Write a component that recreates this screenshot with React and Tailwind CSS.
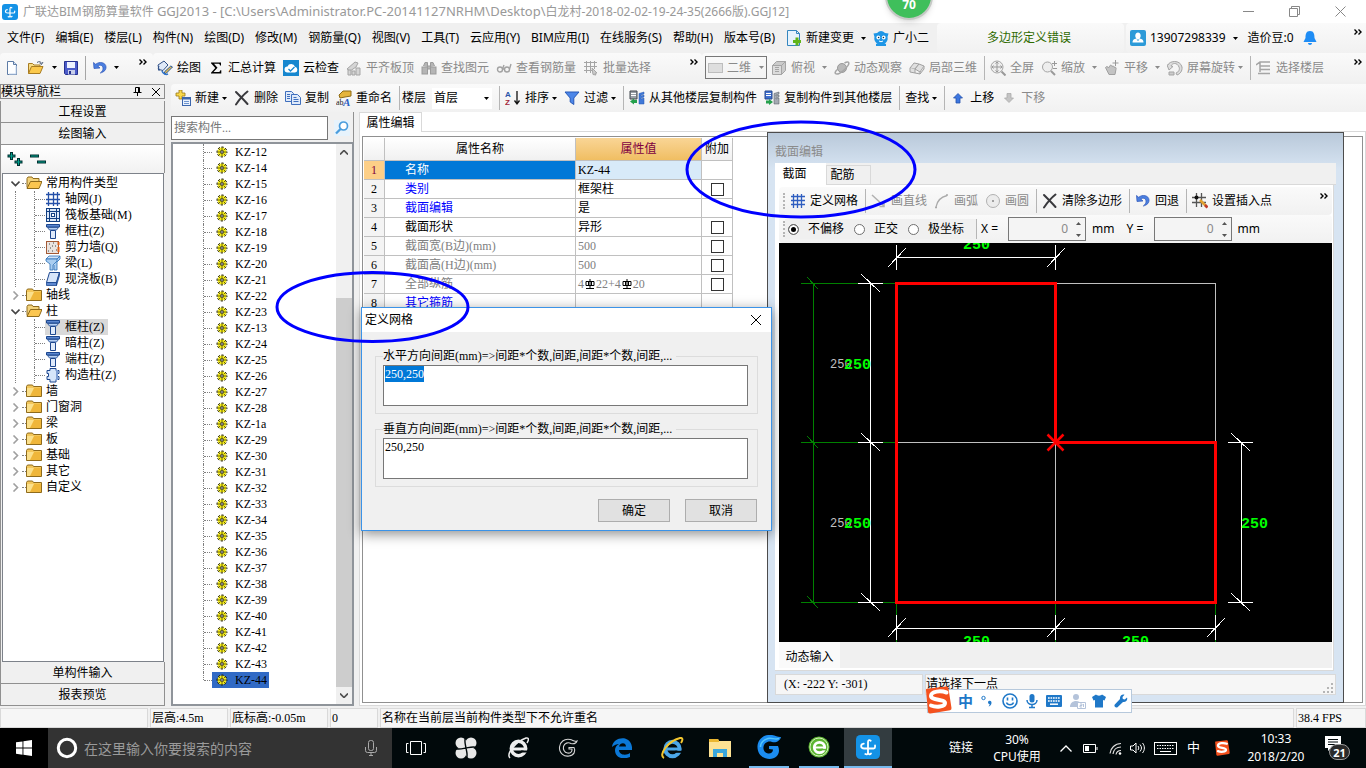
import { useEffect, useRef } from 'react'
import clsx from 'clsx'

// fonts
const UI = 'font-["Noto_Sans","Noto_Sans_CJK_SC",sans-serif]'
const SONG = 'font-["Liberation_Serif","Noto_Sans_CJK_SC",serif]'

// data
const menus = ['文件(F)', '编辑(E)', '楼层(L)', '构件(N)', '绘图(D)', '修改(M)', '钢筋量(Q)', '视图(V)', '工具(T)', '云应用(Y)', 'BIM应用(I)', '在线服务(S)', '帮助(H)', '版本号(B)']

const navTree = [
    { name: '常用构件类型', open: true, items: [['grid', '轴网(J)'], ['raft', '筏板基础(M)'], ['column', '框柱(Z)'], ['wall', '剪力墙(Q)'], ['beam', '梁(L)'], ['slab', '现浇板(B)']] },
    { name: '轴线' },
    { name: '柱', open: true, items: [['column', '框柱(Z)', true], ['column', '暗柱(Z)'], ['column', '端柱(Z)'], ['tie', '构造柱(Z)']] },
    { name: '墙' },
    { name: '门窗洞' },
    { name: '梁' },
    { name: '板' },
    { name: '基础' },
    { name: '其它' },
    { name: '自定义' },
]

const columns = ['12', '14', '15', '16', '17', '18', '19', '20', '21', '22', '23', '13', '24', '25', '26', '27', '28', '1a', '29', '30', '31', '32', '33', '34', '35', '36', '37', '38', '39', '40', '41', '42', '43', '44']

const props = [
    { name: '名称', value: 'KZ-44', active: true },
    { name: '类别', value: '框架柱', color: 'text-[#0000ff]', check: true },
    { name: '截面编辑', value: '是', color: 'text-[#0000ff]' },
    { name: '截面形状', value: '异形', color: 'text-black', check: true },
    { name: '截面宽(B边)(mm)', value: '500', color: 'text-[#808080]', check: true },
    { name: '截面高(H边)(mm)', value: '500', color: 'text-[#808080]', check: true },
    { name: '全部纵筋', value: 'rebar', color: 'text-[#808080]', check: true },
    { name: '其它箍筋', value: '', color: 'text-[#0000ff]' },
]

// icons, all on a 16 unit box
const icons = {
    app: <><rect width="16" height="16" rx="3" fill="#1492e6" /><path d="M9.800 3.800C8.800 3 8 3.500 8 4.800v6.700c0 1.300-.8 1.700-1.800 1.200M12.700 7v1c0 .8-.4 1-1 1H5.500C2.800 9 2.800 6 5.200 5.700M8 11.800c.3 1.200 1.400 1.400 2 .5" fill="none" stroke="#fff" strokeWidth="1.200" strokeLinecap="round" /></>,
    file: <><path d="M3.500 1.500h6l3 3v10h-9z" fill="#fdfeff" stroke="#5d7ba5" /><path d="M9.500 1.500v3h3" fill="#d4e2f4" stroke="#5d7ba5" /><path d="M5 14h7V6" fill="none" stroke="#c5d7ee" /></>,
    open: <><path d="M.5 13.500v-10h4l1.500 1.500h6v2" fill="#f7dc85" stroke="#a87c22" /><path d="M.5 13.500l3-7h11.500l-3 7z" fill="#fbc94c" stroke="#a87c22" /><path d="M9 2.500c2-1.500 4-1 4.500 1M15 2l-1.500 2.500L11.500 3" fill="none" stroke="#4a5a74" /></>,
    save: <><path d="M1.500 1.500h13v13h-12l-1-1z" fill="#4c5cc9" stroke="#27318f" /><rect x="4" y="2" width="8" height="6" fill="#eef2ff" /><rect x="5" y="10" width="7" height="4.500" fill="#c8cfea" /><rect x="6" y="11" width="2" height="3" fill="#27318f" /></>,
    undo: <path d="M1.500 2.500l.5 6 6-.5-2.200-2c2-1.500 5-.8 5.200 2 .2 2-1 3.600-2.700 5 4-1 6-3.300 5.700-6.300C13.600 2.500 7.500 1 3.700 4.300z" fill="#4b7fe0" stroke="#2c55b8" strokeWidth=".7" />,
    paint: <><path d="M1 5l6-4 4 4-5 5.500-4-1z" fill="#dfe9f8" stroke="#2f4f86" /><path d="M2 6c-1 2-1 4 .5 5" fill="none" stroke="#2f4f86" /><path d="M15.500 7l-6 6-2.500 1 .8-2.500 6-5.500z" fill="#e2b94c" stroke="#2a5b9c" /><path d="M5 11c1 3 4 4 6 3" fill="none" stroke="#2f73c9" strokeWidth="1.500" /></>,
    sigma: <path d="M3 2.500h10v3h-1c-.3-1.500-.8-1.700-2-1.700H6l3.500 4L5.500 12H10c1.500 0 2-.5 2.300-1.800h1V13.500H3v-.8l4.300-4.700L3 3.300z" fill="#000" />,
    cloud: <><rect width="16" height="16" fill="#1787cf" /><path d="M4.500 12.500a3 3 0 010-6 4 4 0 017.500.3 2.900 2.900 0 010 5.700z" fill="#fff" /><path d="M5.500 9l2 2 4-4" fill="none" stroke="#1787cf" strokeWidth="1.300" /></>,
    align: <g fill="#d5d5d5" stroke="#a5a5a5"><path d="M1 9l8-7 3 1-2 4-6 4z" /><path d="M2 10h3v5H2zM6 11h3v4H6zM10 8h4v7h-4z" /></g>,
    binoc: <g fill="#b5b5b5" stroke="#9b9b9b"><path d="M2.500 6L4 2.500h2.500V7M13.500 6L12 2.500H9.500V7" /><rect x="1" y="7" width="5.500" height="7" /><rect x="9.500" y="7" width="5.500" height="7" /><path d="M6.500 6h3v3h-3z" /></g>,
    glasses: <g fill="none" stroke="#a2a2a2" strokeWidth="1.400"><circle cx="4" cy="9.500" r="2.500" /><circle cx="11" cy="9.500" r="2.500" /><path d="M6.500 9h2M6.500 9L8 5M13.500 9L15 4" /></g>,
    batch: <g fill="none" stroke="#a5a5a5"><path d="M1 2.500h13M1 6.500h13M1 10.500h8M3.500 1v12M7.500 1v12M11.500 1v8" /><path d="M9 8l5 5-2 .3L13 15l-3-.5z" fill="#ccc" /></g>,
    flat: <rect x=".5" y="3.500" width="14" height="9" fill="#dedede" stroke="#bdbdbd" />,
    cube: <g fill="#dcdcdc" stroke="#a5a5a5"><path d="M1.500 5.500h9v9h-9z" /><path d="M1.500 5.500l4-4h9l-4 4zM14.500 1.500v9l-4 4v-9z" fill="#cbcbcb" /><path d="M4 7.500h4M4 9.500h4M4 11.500h4" /></g>,
    orbit: <><circle cx="8" cy="8" r="4.500" fill="#b9b9b9" stroke="#9a9a9a" /><path d="M10.500 3C14 1 16 2 14 5.500S6 14 3 14s-2-3 1-5" fill="none" stroke="#a5a5a5" strokeWidth="1.500" /></>,
    local3d: <g fill="#e0e0e0" stroke="#a0a0a0"><path d="M1 8l4-5 5 1-4 5z" /><path d="M6 9l4-5 5 2-4 6z" /><path d="M1 8v4l5 1V9M6 13l5 1v-2M11 14l4-5V6" /></g>,
    full: <><circle cx="7" cy="7" r="6" fill="#eee" stroke="#a5a5a5" /><path d="M7 2v10M2 7h10M5.500 3.500L7 2l1.500 1.500M5.500 10.500L7 12l1.500-1.500M3.500 5.500L2 7l1.500 1.500M10.500 5.500L12 7l-1.500 1.500" fill="none" stroke="#999" /><path d="M11.500 11.500l4 4" stroke="#999" strokeWidth="2" /></>,
    zoom: <><circle cx="6.500" cy="7" r="5" fill="#eee" stroke="#a5a5a5" /><path d="M10 11l4 4" stroke="#999" strokeWidth="2" /><path d="M11 3.500h5M13.500 1v5M12 8.500h4" stroke="#999" /></>,
    pan: <><path d="M1.500 7.500c1-1.500 2.500-1 3 .5L6 5.500c1-.8 2 0 2 1 1-.8 2-.3 2 .7 1.500-.5 2.500.5 2 2L11 14.500H5z" fill="#c3c3c3" stroke="#a0a0a0" /><path d="M11.500 0v6M8.500 3h6" stroke="#999" /></>,
    rotate: <><path d="M1 5c1-4 12-6 14 2 .5 4-2 7-5 8l-1-2c3-1 4-4 3-6-2-5-7-4-8-1l2 .5L2 10 0 5z" fill="#ddd" stroke="#a5a5a5" /><path d="M2 12h5v3H2z" fill="#ccc" stroke="#a5a5a5" /></>,
    floors: <g fill="none" stroke="#a5a5a5" strokeWidth="1.500"><path d="M0 5l4-3h10M4 6h10M4 9.500h10M2 13.500h12M4 2v10" /></g>,
    newItem: <><path d="M4 0h3v3h3v3H7v3H4V6H1V3h3z" fill="#f9d84a" stroke="#9a7a14" strokeWidth=".8" /><rect x="7.500" y="7.500" width="8" height="8" fill="#eaf2fd" stroke="#3c66ad" /><path d="M7.500 8.500h8" stroke="#3c66ad" strokeWidth="2" /><path d="M9 11.500h5M9 13.500h5" stroke="#6f95cf" /></>,
    cross: <path d="M2 2c3 3 8 8 11.500 12M13.500 1.500C9 5 5 10 2 14.500" fill="none" stroke="#39393d" strokeWidth="2" strokeLinecap="round" />,
    copy: <g fill="#dfeafa" stroke="#3f6fbd"><path d="M.5 1.500h6l2 2v8h-8z" /><path d="M6.500 4.500h6l3 3v7h-9z" /><path d="M2 4.500h3M2 6.500h3M2 8.500h3M8.500 7.500h3M8.500 9.500h5M8.500 11.500h5" /></g>,
    rename: <><path d="M3 5l4-4h8v5L9 7l-5 1z" fill="#e5b43c" stroke="#8d6a14" /><text x="0" y="15" fontSize="8" fill="#222" fontFamily="Liberation Serif">ab</text><text x="7" y="15.500" fontSize="11" fontStyle="italic" fontWeight="700" fill="#2b5fc4" fontFamily="Liberation Serif">A</text></>,
    sort: <><text x="0" y="7" fontSize="8" fontWeight="700" fill="#2a55a8" fontFamily="Liberation Sans">A</text><text x="0" y="15" fontSize="8" fontWeight="700" fill="#a3293b" fontFamily="Liberation Sans">Z</text><path d="M12 1v12M9.500 10.500L12 14l2.500-3.500" fill="none" stroke="#111" strokeWidth="1.300" /></>,
    filter: <path d="M1 2h14l-5.200 6v6.500L6.200 12V8z" fill="#4c86e8" stroke="#2658b7" />,
    fromFloor: <><path d="M1 1h7v8H1z" fill="#9aa1a8" stroke="#43484e" /><path d="M2 3.500h5M2 5.500h5" stroke="#fff" /><path d="M10 3.500l5-1.500v2l-3 1v1l3-1v2l-3 1v1l3-1v6h-5z" fill="#3f78d8" stroke="#2556ad" strokeWidth=".5" /><path d="M1 11.500l4-3V10h3v3H5v1.500z" fill="#25a04c" /></>,
    toFloor: <><path d="M1 1h7v8H1z" fill="#3f6fd0" stroke="#27488c" /><path d="M2 3.500h5M2 5.500h5" stroke="#fff" /><path d="M10 3.500l5-1.500v2l-3 1v1l3-1v2l-3 1v1l3-1v6h-5z" fill="#a5abb3" stroke="#4f565e" strokeWidth=".5" /><path d="M9 12L5 9v1.500H2v3h3V15z" fill="#25a04c" /></>,
    up: <path d="M8 3.500L3.500 8H6v5h4V8h2.500z" fill="#3d77e0" stroke="#2350ac" strokeWidth=".8" />,
    down: <path d="M8 12.500L3.500 8H6V3.500h4V8h2.500z" fill="#c4c4c4" stroke="#ababab" strokeWidth=".8" />,
    change: <><path d="M1.500.5h9l3 3v12h-12z" fill="#e6f3fd" stroke="#3486bf" /><path d="M10.500.5v3h3" fill="none" stroke="#3486bf" /><path d="M9.500 7.500h3V10H15v3h-2.500v2.500h-3V13H7v-3h2.500z" fill="#5fb51a" /></>,
    owl: <><path d="M.5 3.500L4 3q4-4 8 0l3.500.5-1 3.500c1 4-2 7.500-6.500 7.500S.500 11 1.500 7z" fill="#1e96e6" /><path d="M3 14l2-1h6l2 1v2H3z" fill="#1e96e6" /><circle cx="5.300" cy="7.500" r="1.900" fill="#fff" /><circle cx="10.700" cy="7.500" r="1.900" fill="#fff" /><circle cx="5.600" cy="7.500" r=".8" fill="#134" /><circle cx="10.400" cy="7.500" r=".8" fill="#134" /><path d="M6 11q2 1.500 4 0" stroke="#fff" fill="none" /></>,
    user: <><rect width="16" height="16" rx="2" fill="#2c9ad8" /><path d="M8 2.500c3 0 3.500 4.500 1.500 6 3 .5 4 1.500 4 4h-11c0-2.500 1-3.500 4-4C4.500 7 5 2.500 8 2.500z" fill="#fff" /><path d="M6.500 9.500L8 11l1.500-1.500" fill="#2c9ad8" /></>,
    bell: <path d="M8 1c4 0 4.500 3.500 4.500 7l2 4h-13l2-4C3.500 4.500 4 1 8 1zM6 13h4c0 2.500-4 2.500-4 0z" fill="#1f8df5" />,
    hash: <path d="M3.500 1v14M7.500 1v14M11.500 1v14M1 3.500h14M1 7.500h14M1 11.500h14" stroke="#2f5ec0" fill="none" strokeWidth="1.300" />,
    line: <path d="M1 2l12 11M13 9v4.500H8.500" stroke="#b1b1b1" fill="none" strokeWidth="1.500" />,
    arc: <path d="M2 14C3 8 7 4 13 2.500M1 14.500h2M12 2h2" stroke="#a9a9a9" fill="none" strokeWidth="1.300" />,
    circle: <><circle cx="8" cy="8" r="6.500" fill="#ececec" stroke="#b1b1b1" /><circle cx="8" cy="8" r="1" fill="#888" /></>,
    insert: <><path d="M4.500 0v14M9.500 0v14M0 4.500h14M0 9.500h14" stroke="#555" fill="none" strokeWidth="1.300" /><circle cx="4.500" cy="4.500" r="2" fill="#111" /><path d="M8 7l7 7" stroke="#e0a030" strokeWidth="2.500" /><path d="M13 12l2.500 2.500" stroke="#c0392b" strokeWidth="2.500" /></>,
    search: <><rect width="16" height="16" fill="#e7f3fc" /><circle cx="9.500" cy="6" r="4" fill="#fff" stroke="#4a9ddd" strokeWidth="1.700" /><path d="M6.500 9L2 13.500" stroke="#4a9ddd" strokeWidth="2.300" /></>,
    folder: <><path d="M.5 3.500l1-1.500h5l1 1.500h8v10H.5z" fill="#f3c75b" stroke="#8f6b1c" /><path d="M1 5h14v8H1z" fill="#fbe08c" /><path d="M8 5h7v8H4z" fill="#efb63a" /></>,
    folderOpen: <><path d="M1 12.500V3.500l1-1.500h4l1 1.500h6v3" fill="#f3d37c" stroke="#8f6b1c" /><path d="M1 13.500l3.500-7h11.500l-3 7z" fill="#fbc650" stroke="#8f6b1c" /></>,
    grid: <path d="M3.500 1v14M8.500 1v14M12.500 1v14M1 3.500h14M1 8.500h14M1 12.500h14" stroke="#2450a8" fill="none" strokeWidth="1.300" />,
    raft: <><rect x="1.500" y="1.500" width="13" height="13" fill="#dbe8f9" stroke="#123f82" /><path d="M4.500 1v14M11.500 1v14M1 4.500h14M1 11.500h14" stroke="#123f82" /><rect x="6.500" y="6.500" width="3" height="3" fill="#fff" stroke="#123f82" /></>,
    column: <><path d="M1.500 1.500h13V4h-13z" fill="#5b87d0" stroke="#1d478f" /><path d="M2.500 4.500h11l-2 2.500h-7z" fill="#b5cff3" stroke="#1d478f" strokeWidth=".8" /><path d="M5.500 7.500h5v8h-5z" fill="#dfeafa" stroke="#1d478f" /></>,
    wall: <><rect x="1.500" y="2.500" width="12" height="12" fill="#e9e3df" stroke="#a35a36" /><path d="M4 5h1M8 4h1M10 7h1M5 9h1M7 12h1M11 11h1M3 12h1M7 7h1" stroke="#444" /><path d="M13.500 3v3M13.500 8v5" stroke="#e06018" strokeWidth="2" /></>,
    beam: <><path d="M1 4l3-3h11l-3 3z" fill="#cfe3f8" stroke="#2b70b8" strokeWidth=".8" /><path d="M1 4h11v2l-4 4v5H5V9L1 6zM12 4l3-3v3l-3 3v8h-3v-5" fill="#a9cdf0" stroke="#2b70b8" strokeWidth=".8" /></>,
    slab: <><path d="M4.500 1.500h10l-3 10h-10z" fill="#d6e5fa" stroke="#1d478f" /><path d="M1.500 11.500h10v3h-10zM11.500 11.500l3-10v3l-3 10z" fill="#5b87d0" stroke="#1d478f" strokeWidth=".8" /></>,
    tie: <><path d="M5 1.500h6v2h3v3h-2v3h2v3h-3v2.500H5v-2.500H2v-3h1.500v-3H2v-3h3z" fill="#d6e5fa" stroke="#1d478f" /><path d="M12 3v10" stroke="#7f9fd5" strokeWidth="2" /></>,
    gear: <><circle cx="8" cy="8" r="4.500" fill="#f7ee1b" /><circle cx="8" cy="8" r="5" fill="none" stroke="#1d1b00" strokeDasharray="2.400 1.527" strokeDashoffset="1.200" /><path d="M8 3v3.500M8 9.500V13M3 8h3.500M9.500 8H13M4.500 4.500l2 2M9.500 9.500l2 2M11.500 4.500l-2 2M6.500 9.500l-2 2" stroke="#4a4500" strokeWidth=".8" /><circle cx="8" cy="8" r="1.300" fill="#fff" stroke="#222" /></>,
}

function Icon({ name, className = 'size-4' }) {
    return <svg viewBox="0 0 16 16" className={clsx('shrink-0', className)} aria-hidden="true">{icons[name]}</svg>
}

function Caret({ className }) {
    return <svg viewBox="0 0 5 3" className={clsx('h-[3px] w-[5px] shrink-0', className)} aria-hidden="true"><path d="M0 0h5L2.500 3z" fill="currentColor" /></svg>
}

function Tool({ icon, label, off, drop, split }) {
    return (
        <button className={clsx('flex shrink-0 items-center', off ? 'text-[#8a8a8a]' : 'text-black')}>
            {icon && <Icon name={icon} />}
            {label && <span className={icon ? 'ml-1' : ''}>{label}</span>}
            {drop && <span className="flex w-2 justify-end"><Caret /></span>}
            {split && <span className="flex w-3 justify-end"><Caret /></span>}
        </button>
    )
}

function Sep() {
    return <div className="-mr-0.5 h-6 w-px shrink-0 bg-[#b5b5b5]" />
}

function More({ className }) {
    return (
        <button aria-label="更多" className={clsx('shrink-0', className)}>
            <svg viewBox="0 0 8 6" className="h-1.5 w-2"><path d="M.5.5L3 3 .5 5.500M4.500.5L7 3 4.500 5.500" fill="none" stroke="#000" strokeWidth="1.400" /></svg>
        </button>
    )
}

function TitleBar() {
    return (
        <header className="flex h-[23px] shrink-0 items-center bg-white pl-0.5 text-[#999]">
            <Icon name="app" />
            <h1 className="ml-[5px] flex-1 text-[12px] whitespace-nowrap">
                广联达BIM钢筋算量软件 <span className="text-[13px]">GGJ2013 - [C:\Users\Administrator.PC-20141127NRHM\Desktop\</span>白龙村-2018-02-02-19-24-35(2666版).GGJ12]
            </h1>
            <div className="flex gap-[35px] pr-5">
                <button aria-label="最小化"><svg viewBox="0 0 11 11" className="size-[11px]"><path d="M0 5.500h11" stroke="#888" /></svg></button>
                <button aria-label="还原"><svg viewBox="0 0 11 11" className="size-[11px]"><path d="M.5 2.500h8v8h-8zM2.500 2.500v-2h8v8h-2" fill="none" stroke="#888" /></svg></button>
                <button aria-label="关闭"><svg viewBox="0 0 11 11" className="size-[11px]"><path d="M.5.5l10 10M10.500.5l-10 10" fill="none" stroke="#888" /></svg></button>
            </div>
        </header>
    )
}

function MenuBar() {
    return (
        <nav className="flex h-[30px] shrink-0 items-stretch text-[12px] whitespace-nowrap">
            <div className="flex w-[937px] items-center gap-[11px] pl-[7px]">
                {menus.map((m) => <button key={m} className="shrink-0">{m}</button>)}
                <div className="flex items-center gap-[7px]">
                    <Tool icon="change" label="新建变更" split />
                    <Tool icon="owl" label="广小二" />
                </div>
            </div>
            <div className="w-[187px] rounded bg-linear-to-b from-[#fafafa] to-[#f1f1f1] pl-[50px] leading-[30px] text-[#2f6b00]">多边形定义错误</div>
            <div className="ml-0.5 flex flex-1 items-center rounded-l bg-linear-to-b from-[#fafafa] to-[#f1f1f1] pl-1">
                <Tool icon="user" label="13907298339" split />
                <span className="ml-2.5">造价豆:0</span>
                <Icon name="bell" className="ml-2 size-4" />
                <More className="mr-1 ml-auto self-start pt-1.5" />
            </div>
        </nav>
    )
}

function MainToolbar() {
    return (
        <div className="flex h-[29px] shrink-0 text-[12px] whitespace-nowrap">
            <div className="flex w-[153px] items-center rounded bg-linear-to-b from-[#fafafa] to-[#f1f1f1] pl-1">
                <Icon name="file" />
                <button className="ml-2 flex items-center"><Icon name="open" /><Caret className="ml-2" /></button>
                <Icon name="save" className="ml-1.5 size-4" />
                <div className="mx-1.5 h-6 w-px bg-[#a5a5a5]" />
                <button className="flex items-center"><Icon name="undo" /><Caret className="ml-1.5" /></button>
                <More className="mr-1.5 ml-auto self-start pt-1.5" />
            </div>
            <div className="flex w-[549px] items-center gap-[7px] rounded bg-linear-to-b from-[#fafafa] to-[#f1f1f1] pl-1">
                <Tool icon="paint" label="绘图" />
                <Tool icon="sigma" label="汇总计算" />
                <Tool icon="cloud" label="云检查" />
                <Tool icon="align" label="平齐板顶" off />
                <Tool icon="binoc" label="查找图元" off />
                <Tool icon="glasses" label="查看钢筋量" off />
                <Tool icon="batch" label="批量选择" off />
                <More className="mr-1 ml-auto self-start pt-1.5" />
            </div>
            <div className="flex flex-1 items-center gap-[7px] rounded-l bg-linear-to-b from-[#fafafa] to-[#f1f1f1] pl-[3px]">
                <div className="-mr-[3px] flex h-[23px] w-[62px] items-center border border-[#777] pl-0.5 text-[#8a8a8a]">
                    <Icon name="flat" />
                    <select aria-label="视图模式" className="ml-[3px] w-7 appearance-none outline-none">
                        <option>二维</option>
                    </select>
                    <Caret className="ml-1" />
                </div>
                <Tool icon="cube" label="俯视" off split />
                <Tool icon="orbit" label="动态观察" off />
                <Tool icon="local3d" label="局部三维" off />
                <Sep />
                <Tool icon="full" label="全屏" off />
                <Tool icon="zoom" label="缩放" off split />
                <Tool icon="pan" label="平移" off split />
                <Tool icon="rotate" label="屏幕旋转" off drop />
                <Sep />
                <Tool icon="floors" label="选择楼层" off />
                <More className="mr-1 ml-auto self-start pt-1.5" />
            </div>
        </div>
    )
}

function ItemToolbar() {
    return (
        <div className="flex h-7 shrink-0 items-center gap-[7px] rounded-l bg-linear-to-b from-[#fafafa] to-[#f1f1f1] pl-1 text-[12px] whitespace-nowrap">
            <Tool icon="newItem" label="新建" drop />
            <Tool icon="cross" label="删除" />
            <Tool icon="copy" label="复制" />
            <Tool icon="rename" label="重命名" />
            <div className="flex items-center">
                <div className="mr-0.5 h-6 w-px bg-[#b5b5b5]" />
                <label htmlFor="floor">楼层</label>
                <div className="ml-1.5 flex h-[21px] w-[60px] items-center bg-white">
                    <select id="floor" className="w-[52px] appearance-none pl-0.5 outline-none">
                        <option>首层</option>
                    </select>
                    <Caret />
                </div>
            </div>
            <Sep />
            <Tool icon="sort" label="排序" drop />
            <Tool icon="filter" label="过滤" drop />
            <Sep />
            <Tool icon="fromFloor" label="从其他楼层复制构件" />
            <Tool icon="toFloor" label="复制构件到其他楼层" />
            <Sep />
            <Tool label="查找" drop />
            <Sep />
            <Tool icon="up" label="上移" />
            <Tool icon="down" label="下移" off />
        </div>
    )
}

function NavButton({ children }) {
    return <button className="h-[22px] w-full shrink-0 border-r border-b border-[#909090] bg-[#f0f0f0] text-center text-[12px]">{children}</button>
}

function TreeArrow({ open }) {
    return (
        <svg viewBox="0 0 9 9" className="mr-0.5 ml-2 size-[9px] shrink-0">
            {open
                ? <path d="M.5 2.500l4 4 4-4" fill="none" stroke="#444" strokeWidth="1.600" />
                : <path d="M2.500.5l4 4-4 4" fill="none" stroke="#a0a0a0" strokeWidth="1.600" />}
        </svg>
    )
}

function NavPanel() {
    return (
        <aside className={clsx('flex w-[165px] shrink-0 flex-col', SONG)}>
            <div className="flex h-[15px] shrink-0 items-center border border-[#8c8c8c] text-[12px] leading-none">
                <h2>模块导航栏</h2>
                <button aria-label="固定" className="ml-auto"><svg viewBox="0 0 9 9" className="size-[9px]"><path d="M2.500 5V.5h4V5M5.500 0v5M.5 5.500h8M4.500 5v4" fill="none" stroke="#000" /></svg></button>
                <button aria-label="关闭" className="mr-1 ml-2.5"><svg viewBox="0 0 8 8" className="size-2"><path d="M0 0l8 8M8 0L0 8" stroke="#000" /></svg></button>
            </div>
            <div className="mt-0.5 flex min-h-0 flex-1 flex-col border-l border-[#909090]">
                <NavButton>工程设置</NavButton>
                <NavButton>绘图输入</NavButton>
                <div className="flex h-7 shrink-0 items-center gap-[7px] border-r border-[#909090] bg-linear-to-b from-white to-[#f1f1f1] pl-1.5">
                    <svg viewBox="0 0 16 16" className="size-4"><path d="M4.500 1v8M.5 5h8M11.500 7v8M7.500 11h8" stroke="#002f2f" strokeWidth="3" /><path d="M4.500 2v6M1.500 5h6M11.500 8v6M8.500 11h6" stroke="#00a08c" /></svg>
                    <svg viewBox="0 0 16 16" className="size-4"><path d="M0 5h9M7 11h9" stroke="#002f2f" strokeWidth="3" /><path d="M1 5h7M8 11h7" stroke="#00a08c" /></svg>
                </div>
                <div className="mx-px min-h-0 flex-1 overflow-hidden border border-[#7d828a] bg-white pt-px text-[12px] leading-4">
                    {navTree.map((group) => (
                        <div key={group.name}>
                            <div className="flex h-4 items-center">
                                <TreeArrow open={group.open} />
                                <span className="w-1 border-t border-dotted border-[#808080]" />
                                <Icon name={group.open ? 'folderOpen' : 'folder'} />
                                <span className="ml-1">{group.name}</span>
                            </div>
                            {group.items && (
                                <div className="ml-3 border-l border-dotted border-[#808080] pl-[18px]">
                                    {group.items.map(([icon, label, active]) => (
                                        <div key={label} className="flex h-4 items-center border-l border-dotted border-[#808080]">
                                            <span className="w-2.5 border-t border-dotted border-[#808080]" />
                                            <span className={clsx('flex h-4 items-center pr-1', active && 'bg-[#d9d9d9]')}>
                                                <Icon name={icon} />
                                                <span className="ml-1">{label}</span>
                                            </span>
                                        </div>
                                    ))}
                                </div>
                            )}
                        </div>
                    ))}
                </div>
                <NavButton>单构件输入</NavButton>
                <NavButton>报表预览</NavButton>
            </div>
        </aside>
    )
}

function ComponentList() {
    return (
        <section className="flex w-[183px] shrink-0 flex-col">
            <div className="flex h-[30px] shrink-0 items-end gap-1.5 border-r border-[#909090] pb-0.5">
                <input type="text" aria-label="搜索构件" placeholder="搜索构件..." className={clsx('h-6 w-[157px] border border-[#777] bg-white px-0.5 text-[12px] outline-none placeholder:text-[#777]', SONG)} />
                <button aria-label="搜索" className="pb-1"><Icon name="search" /></button>
            </div>
            <div className="flex min-h-0 flex-1 border-2 border-[#8f949a] bg-white">
                <ul className={clsx('flex-1 overflow-hidden text-[12px] leading-4', SONG)}>
                    {columns.map((no, i) => (
                        <li key={no} className="ml-[30px] flex h-4 items-center">
                            <span className={clsx('self-start border-l border-dotted border-[#808080]', i === columns.length - 1 ? 'h-2' : 'h-4')} />
                            <span className="w-2 border-t border-dotted border-[#808080]" />
                            <span className={clsx('flex h-4 w-[57px] items-center pl-0.5', no === '44' && 'bg-[#316ac5]')}>
                                <Icon name="gear" />
                                <span className="ml-[5px]">KZ-{no}</span>
                            </span>
                        </li>
                    ))}
                </ul>
                <div className="flex w-4 flex-col bg-[#f0f0f0]">
                    <button aria-label="向上" className="flex h-[17px] items-center justify-center"><svg viewBox="0 0 8 5" className="h-[5px] w-2"><path d="M0 4.500l4-4 4 4" fill="none" stroke="#505050" strokeWidth="1.700" /></svg></button>
                    <div className="mt-[137px] flex-1 bg-[#cdcdcd]" />
                    <button aria-label="向下" className="flex h-[17px] items-center justify-center"><svg viewBox="0 0 8 5" className="h-[5px] w-2"><path d="M0 .5l4 4 4-4" fill="none" stroke="#505050" strokeWidth="1.700" /></svg></button>
                </div>
            </div>
        </section>
    )
}

// HRB rebar sign
function Rebar() {
    return <svg viewBox="0 0 10 10" className="mx-px inline-block size-2.5 align-[-1px]"><path d="M5 0v10M1 2.500h8v4H1zM1 9.500h8M3.500 2.500v4M6.500 2.500v4" fill="none" stroke="#000" /></svg>
}

function PropertyEditor() {
    return (
        <section className={clsx('flex flex-1 flex-col pl-[5px] text-[12px]', SONG)}>
            <div className="flex h-5 shrink-0">
                <button className="w-[63px] border-x border-t border-[#d9d9d9] bg-white text-center">属性编辑</button>
                <div className="flex-1 border-b border-[#d9d9d9] bg-white" />
            </div>
            <div className="flex min-h-0 flex-1 border-x border-b border-[#d9d9d9] bg-white px-0.5 pt-1 pb-0.5">
                <div className="flex-1 overflow-hidden border border-[#909090] pt-px pl-px">
                    <table className="w-[369px] table-fixed border-separate border-spacing-0 leading-4">
                        <colgroup>
                            <col className="w-[21px]" />
                            <col className="w-[191px]" />
                            <col className="w-[126px]" />
                            <col className="w-[31px]" />
                        </colgroup>
                        <thead>
                            <tr className="h-[23px] bg-linear-to-b from-white to-[#f0f0f0]">
                                <th className="border-r border-b border-[#c0c0c0]" />
                                <th className="border-r border-b border-[#c0c0c0] p-0 font-normal">属性名称</th>
                                <th className="border-r border-b border-[#c0c0c0] bg-linear-to-b from-[#f9d595] to-[#f0be62] p-0 font-normal text-[#800040]">属性值</th>
                                <th className="border-r border-b border-[#c0c0c0] p-0 font-normal">附加</th>
                            </tr>
                        </thead>
                        <tbody>
                            {props.map((p, i) => (
                                <tr key={p.name} className="h-[19px]">
                                    <td className={clsx('border-r border-b border-[#c0c0c0] p-0 text-center', p.active ? 'bg-[#fdcf87] text-[#800040]' : 'bg-[#f4f4f4]')}>{i + 1}</td>
                                    <td className={clsx('border-r border-b border-[#c0c0c0] p-0 pl-5', p.active ? 'bg-[#0078d7] text-white' : p.color)}>{p.name}</td>
                                    <td className={clsx('border-r border-b border-[#c0c0c0] p-0 pl-0.5', p.active && 'bg-[#d8eaf9]', p.color === 'text-[#808080]' && 'text-[#808080]')}>
                                        {p.value === 'rebar' ? <>4<Rebar />22+4<Rebar />20</> : p.value}
                                    </td>
                                    <td className="border-r border-b border-[#c0c0c0] p-0">
                                        {p.check && <input type="checkbox" aria-label={p.name} className="mx-auto block size-[13px] appearance-none border border-[#333] bg-white" />}
                                    </td>
                                </tr>
                            ))}
                        </tbody>
                    </table>
                </div>
            </div>
        </section>
    )
}

function Spin({ id, label }) {
    return (
        <div className="flex items-center">
            <label htmlFor={id} className="w-[27px]">{label}</label>
            <div className="flex h-6 w-[78px] items-center border border-[#777] bg-[#f4f4f4] pr-1">
                <input id={id} type="text" defaultValue="0" className="w-0 flex-1 bg-transparent pr-2 text-right text-[#8a8a8a] outline-none" />
                <div className="flex flex-col gap-[9px] text-[#555]">
                    <Caret className="rotate-180" />
                    <Caret />
                </div>
            </div>
            <span className="ml-1.5">mm</span>
        </div>
    )
}

const mark = 'Liberation Mono'

function SectionDrawing() {
    // shared rows and columns of the L section
    const ys = [40, 199, 359]
    const xs = [117, 276, 436]
    return (
        <svg viewBox="0 0 553 399" className="min-h-0 w-full flex-1 bg-black">
            <g shapeRendering="crispEdges" fill="none" strokeWidth="1">
                <path d="M34.500 40v319M117.500 359v40M276.500 359v40M436.500 359v40" stroke="#008000" />
                {ys.map((y) => <path key={y} d={`M22 ${y + 0.5}h95M28 ${y - 6}l11 12`} stroke="#008000" />)}
                <path d="M276 40.500h160.500v159M117 199.500h159.500v160" stroke="#c0c0c0" />
                <path d="M91.500 40v319M462.500 199v160M117 14.500h160M117 385.500h319" stroke="#fff" />
                {ys.map((y) => <path key={y} d={`M79 ${y + 0.5}h25M82 ${y - 9}l19 18`} stroke="#fff" />)}
                {ys.slice(1).map((y) => <path key={y} d={`M449 ${y + 0.5}h25M452 ${y - 9}l19 18`} stroke="#fff" />)}
                {xs.slice(0, 2).map((x) => <path key={x} d={`M${x + 0.5} 2v25M${x - 8} 24l18-19`} stroke="#fff" />)}
                {xs.map((x) => <path key={x} d={`M${x + 0.5} 372v25M${x - 8} 394l18-19`} stroke="#fff" />)}
                <path d="M117.500 40.500h159v159h160v160h-319z" stroke="#f00" strokeWidth="3" />
            </g>
            <path d="M268.500 191.500l16 16M284.500 191.500l-16 16" stroke="#f00" strokeWidth="2.500" />
            <g fontFamily={mark} fontSize="12" fill="#c0c0c0">
                <text x="51" y="125">250</text>
                <text x="51" y="284">250</text>
            </g>
            <g fontFamily={mark} fontSize="15" fontWeight="700" fill="#00ff00">
                <text x="184" y="6">250</text>
                <text x="65" y="126">250</text>
                <text x="65" y="285">250</text>
                <text x="462" y="285">250</text>
                <text x="184" y="403">250</text>
                <text x="343" y="403">250</text>
            </g>
        </svg>
    )
}

function SectionWindow() {
    const modes = ['不偏移', '正交', '极坐标']
    return (
        <section className="absolute top-[132px] left-[767px] flex h-[571px] w-[577px] flex-col border border-[#4c4c4c] bg-[#d7e4f2] bg-linear-to-b from-[#b9c9da] to-[#d7e4f2] to-[36px] px-[7px] pb-[7px] text-[12px] whitespace-nowrap">
            <h2 className="h-[30px] shrink-0 pt-[9px] leading-5 text-[#8b8b8b]">截面编辑</h2>
            <div className={clsx('flex h-[22px] shrink-0 items-end bg-[#f0f0f0]', SONG)}>
                <button className="h-[22px] w-[51px] bg-white pr-3">截面</button>
                <button className="h-5 w-[45px] border border-[#d9d9d9] pr-3">配筋</button>
                <div className="flex-1 self-stretch border-b border-[#d9d9d9]" />
            </div>
            <div className="mr-0.5 flex min-h-0 flex-1 flex-col border-r border-b border-[#d9d9d9] bg-white pt-0.5 pr-px pb-0.5 pl-1">
                <div className="flex h-7 shrink-0 items-center gap-[7px] rounded bg-linear-to-b from-[#fafafa] to-[#f1f1f1] pl-1">
                    <div className="-mr-0.5 h-4 border-l-2 border-dotted border-[#b5b5b5]" />
                    <Tool icon="hash" label="定义网格" />
                    <Sep />
                    <Tool icon="line" label="画直线" off />
                    <Tool icon="arc" label="画弧" off />
                    <Tool icon="circle" label="画圆" off />
                    <Sep />
                    <Tool icon="cross" label="清除多边形" />
                    <Sep />
                    <Tool icon="undo" label="回退" />
                    <Sep />
                    <Tool icon="insert" label="设置插入点" />
                    <More className="mr-1 ml-auto self-start pt-1.5" />
                </div>
                <div className="flex h-7 shrink-0 items-center rounded bg-linear-to-b from-[#fafafa] to-[#f1f1f1] pl-1">
                    <div className="h-4 border-l-2 border-dotted border-[#b5b5b5]" />
                    <div className="flex h-5 items-center gap-2.5 bg-[#f0f0f0] pr-3 pl-[3px]">
                        {modes.map((m, i) => (
                            <label key={m} className="flex items-center gap-[9px]">
                                <input type="radio" name="mode" defaultChecked={i === 0} className="size-[11px] appearance-none rounded-full border border-[#707070] bg-white checked:bg-black checked:inset-ring-2 checked:inset-ring-white" />
                                {m}
                            </label>
                        ))}
                    </div>
                    <div className="mr-1 h-5 w-px bg-[#b5b5b5]" />
                    <Spin id="off-x" label="X =" />
                    <div className="w-3" />
                    <Spin id="off-y" label="Y =" />
                </div>
                <SectionDrawing />
                <div className="flex h-[26px] shrink-0 bg-[#f0f0f0]">
                    <button className="w-[61px] bg-[#fafafa] pt-1">动态输入</button>
                </div>
            </div>
            <div className={clsx('mt-[3px] flex h-[21px] shrink-0 gap-0.5 leading-[18px]', SONG)}>
                <div className="w-[148px] border border-[#d9d9d9] bg-[#f6f6f6] pl-2">(X: -222 Y: -301)</div>
                <div className="relative flex-1 border border-[#d9d9d9] bg-[#f6f6f6]">
                    请选择下一点
                    <svg viewBox="0 0 12 12" className="absolute right-0 bottom-0 size-3"><path d="M8 1h2v2H8zM4 5h2v2H4zM8 5h2v2H8zM0 9h2v2H0zM4 9h2v2H4zM8 9h2v2H8z" fill="#b5b5b5" /></svg>
                </div>
            </div>
        </section>
    )
}

function GridDialog() {
    const first = useRef(null)

    useEffect(() => {
        first.current.focus()
        first.current.select()
    }, [])

    return (
        <div role="dialog" aria-label="定义网格" className={clsx('absolute top-[307px] left-[361px] w-[411px] border border-[#3b93e8] bg-[#f0f0f0] text-[12px] leading-4 shadow-[0_3px_12px_rgba(0,0,0,0.45)]', SONG)}>
            <div className="flex h-6 items-center bg-white pr-[10px] pl-[3px]">
                <span className={clsx('flex-1', UI)}>定义网格</span>
                <button aria-label="关闭"><svg viewBox="0 0 10 10" className="size-2.5"><path d="M0 0l10 10M10 0L0 10" stroke="#000" /></svg></button>
            </div>
            <div className="px-[13px] pt-4 pb-2">
                <fieldset className="h-[66px] border border-[#dcdcdc] px-[7px]">
                    <legend className="pr-1">水平方向间距(mm)=&gt;间距*个数,间距,间距*个数,间距,...</legend>
                    <textarea ref={first} aria-label="水平方向间距" defaultValue="250,250" className="mt-px block h-[41px] w-[365px] resize-none border border-[#777] bg-white px-px caret-transparent outline-none selection:bg-[#0078d7] selection:text-white" />
                </fieldset>
                <fieldset className="mt-[7px] h-[66px] border border-[#dcdcdc] px-[7px]">
                    <legend className="pr-1">垂直方向间距(mm)=&gt;间距*个数,间距,间距*个数,间距,...</legend>
                    <textarea aria-label="垂直方向间距" defaultValue="250,250" className="mt-px block h-[41px] w-[365px] resize-none border border-[#777] bg-white px-px outline-none" />
                </fieldset>
                <div className="mt-3 flex justify-end gap-[15px] pr-px">
                    <button className="h-[23px] w-[72px] border border-[#adadad] bg-[#e1e1e1]">确定</button>
                    <button className="h-[23px] w-[72px] border border-[#adadad] bg-[#e1e1e1]">取消</button>
                </div>
            </div>
        </div>
    )
}

function StatusBar() {
    return (
        <footer className={clsx('mt-0.5 flex h-5 shrink-0 gap-0.5 text-[12px] leading-[18px] whitespace-nowrap', SONG)}>
            <div className="w-[148px] border border-[#d9d9d9] bg-[#f6f6f6]" />
            <div className="w-[78px] border border-[#d9d9d9] bg-[#f6f6f6] pl-px">层高:4.5m</div>
            <div className="w-[98px] border border-[#d9d9d9] bg-[#f6f6f6] pl-px">底标高:-0.05m</div>
            <div className="w-12 border border-[#d9d9d9] bg-[#f6f6f6] pl-px">0</div>
            <div className="flex-1 border border-[#d9d9d9] bg-[#f6f6f6] pl-px">名称在当前层当前构件类型下不允许重名</div>
            <div className="w-[70px] border border-[#d9d9d9] bg-[#f6f6f6] pl-px">38.4 FPS</div>
        </footer>
    )
}

// sogou logo tile
function Sogou({ className }) {
    return (
        <svg viewBox="0 0 28 28" className={className} aria-hidden="true">
            <path d="M2 4.500Q1.500 3 3 2.700L22 .5q2-.2 2.400 1.500L27.500 22q.2 2-1.500 2.300L6.500 27.500q-2 .2-2.400-1.500z" fill="#f4511e" />
            <path d="M22.500 6.500C17 4.500 7 5 7 10c0 4.500 14 3 14 7 0 4-9 4.500-14 2.500" fill="none" stroke="#fff" strokeWidth="4" strokeLinecap="round" />
        </svg>
    )
}

function ImeBar() {
    return (
        <div className="absolute top-[689px] left-[927px] flex h-6 w-[205px] items-center border border-[#b7c9dc] bg-white pl-[30px] text-[#1f78c8]">
            <Sogou className="absolute -top-1 -left-1 size-7" />
            <span className="w-[17px] text-[15px] leading-none font-bold">中</span>
            <svg viewBox="0 0 12 12" className="ml-1.5 size-3"><circle cx="2.500" cy="3" r="1.700" fill="none" stroke="currentColor" /><path d="M7 7a1.800 1.800 0 013.500.5c0 2-1 3.500-3 4 .8-1 1.200-1.500 1.200-2.200C7.500 9 7 8 7 7z" fill="currentColor" /></svg>
            <svg viewBox="0 0 16 16" className="ml-[9px] size-4"><circle cx="8" cy="8" r="7" fill="none" stroke="currentColor" strokeWidth="1.600" /><path d="M5.500 4.500v3M10.500 4.500v3" stroke="currentColor" strokeWidth="1.600" /><path d="M4.500 9.500c1 3 6 3 7 0" fill="none" stroke="currentColor" strokeWidth="1.400" /></svg>
            <svg viewBox="0 0 12 16" className="ml-2 h-4 w-3"><rect x="3.500" y="1" width="5" height="8.500" rx="2.500" fill="currentColor" /><path d="M1 7c0 6 10 6 10 0M6 11v3M3 14.500h6" fill="none" stroke="currentColor" strokeWidth="1.500" /></svg>
            <svg viewBox="0 0 16 12" className="ml-2 h-3 w-4"><rect width="16" height="12" rx="1" fill="currentColor" /><path d="M2 3h12M2 6h12" stroke="#fff" strokeWidth="1.500" strokeDasharray="1.700 .8" /><path d="M4 9.200h8" stroke="#fff" strokeWidth="1.500" /></svg>
            <svg viewBox="0 0 16 16" className="ml-2 size-4"><circle cx="6" cy="4" r="3" fill="#b4c3da" /><path d="M0 14c0-4 3-6 6-6s4 1 4 2H7v4z" fill="#b4c3da" /><path d="M7.500 9.500h8v6h-8zM10 11h2v1.500h-2V14h2M13.500 11v3" fill="none" stroke="#b4c3da" /></svg>
            <svg viewBox="0 0 14 14" className="ml-1.5 size-3.5"><path d="M4 .5c1 1.500 5 1.500 6 0L14 3l-1.500 3.500L11 6v7.500H3V6l-1.500.5L0 3z" fill="currentColor" /></svg>
            <svg viewBox="0 0 14 14" className="ml-2 size-3.5"><path d="M13 3.500L10.800 5.500 8.800 5l-.3-2L10.500.8C8 0 5.500 2 6 5L.8 10.500c-1.300 1.700 1 4 2.700 2.700L9 8c3 .5 5-2 4-4.500z" fill="currentColor" /></svg>
        </div>
    )
}

function TaskButton({ label, active, running, wide, children }) {
    return (
        <button aria-label={label} className={clsx('flex h-10 shrink-0 items-center justify-center', running ? 'mx-[5px] w-10' : wide ? 'w-[52px]' : 'w-12', active && 'bg-[#333c40]', (active || running) && 'border-b-2 border-[#76b9ed]')}>
            {children}
        </button>
    )
}

function TaskBar() {
    return (
        <footer className={clsx('flex h-10 shrink-0 items-center bg-[#01090b] text-[12px] text-white', UI)}>
            <button aria-label="开始" className="flex h-10 w-12 items-center justify-center bg-black">
                <svg viewBox="0 0 16 16" className="size-4"><path d="M0 2.300L6.500 1.400v6.200H0zM7.400 1.300L16 0v7.600H7.400zM0 8.500h6.500v6.200L0 13.700zM7.400 8.500H16V16l-8.600-1.200z" fill="#fff" /></svg>
            </button>
            <div className="flex h-10 w-[344px] items-center bg-[#333] pl-2">
                <svg viewBox="0 0 22 22" className="size-[22px]"><circle cx="11" cy="11" r="8.700" fill="none" stroke="#fff" strokeWidth="3" /></svg>
                <input type="text" aria-label="搜索" placeholder="在这里输入你要搜索的内容" className="ml-1.5 w-0 flex-1 bg-transparent text-[14px] outline-none placeholder:text-[#9a9a9a]" />
                <svg viewBox="0 0 12 16" className="mr-[15px] h-4 w-3"><rect x="3.500" y=".5" width="5" height="10" rx="2" fill="none" stroke="#aaa" /><path d="M.5 7v3.500q0 2 2 2h7q2 0 2-2V7M6 12.500v3M4 15.500h4" fill="none" stroke="#aaa" /></svg>
            </div>
            <div className="flex">
                <TaskButton label="任务视图">
                    <svg viewBox="0 0 20 16" className="h-4 w-5"><path d="M4.500 1.500h11v13h-11zM2.500 3.500h-2v9h2M17.500 3.500h2v9h-2" fill="none" stroke="#fff" /></svg>
                </TaskButton>
                <TaskButton label="旋风" wide>
                    <svg viewBox="0 0 22 22" className="size-[22px]">
                        <g fill="#e8e8e8"><circle cx="6" cy="6" r="5.500" /><circle cx="16" cy="6" r="5.500" /><circle cx="16" cy="16" r="5.500" /><circle cx="6" cy="16" r="5.500" /><rect x="5" y="5" width="12" height="12" /></g>
                        <path d="M10.500 0c-1.500 4 0 8 .5 11M22 10.500c-4-1.500-8 0-11 .5M11.500 22c1.500-4 0-8-.5-11M0 11.500c4 1.500 8 0 11-.5" fill="none" stroke="#01090b" strokeWidth="1.400" />
                    </svg>
                </TaskButton>
                <TaskButton label="浏览器" wide>
                    <svg viewBox="0 0 22 22" className="size-[22px]"><circle cx="11.500" cy="11.500" r="7.200" fill="none" stroke="#eee" strokeWidth="3.500" /><path d="M5 12h14" stroke="#eee" strokeWidth="3" /><path d="M14 14.500h8" stroke="#01090b" strokeWidth="2" /><path d="M3 21C-1 17 8 5 19 1c3-.5 3 2 1 5" fill="none" stroke="#eee" strokeWidth="1.500" /></svg>
                </TaskButton>
                <TaskButton label="广联达">
                    <svg viewBox="0 0 20 20" className="size-5"><path d="M19 3c-3 1-4-1-7-1.500C6 .5 2 4 1.500 9 1 15 6 19 11 18c5-.5 7-5 5-8.500h-5v1.500h3c.5 3-2 4.500-4.500 4C6 14.500 5 11 5.500 8.500 6.500 5 10 4 13 5.500c3 .8 5 0 6-2.500z" fill="none" stroke="#d5d5d5" strokeWidth="1.100" /></svg>
                </TaskButton>
                <div className="w-1" />
                <TaskButton label="Edge" wide>
                    <svg viewBox="0 0 20 20" className="size-5"><path d="M0 9C1-1 18-4 20 9v3H7c0 5 7 6 11 3v4C11 22 3 20 3 12c0-3 2-5 4-6-2 0-5 1-7 3zm7-.5h7C14 4 8 4 7 8.500z" fill="#0b78d7" /></svg>
                </TaskButton>
                <TaskButton label="Internet Explorer">
                    <svg viewBox="0 0 24 22" className="h-[22px] w-6"><circle cx="12.500" cy="12" r="7.200" fill="none" stroke="#4ba6e8" strokeWidth="4" /><path d="M6 12h14" stroke="#4ba6e8" strokeWidth="3" /><path d="M15 14.800h8" stroke="#01090b" strokeWidth="2" /><path d="M4 21C-2 18 8 4 20 1c3-.5 3 2 1 5" fill="none" stroke="#f3c62f" strokeWidth="2" /></svg>
                </TaskButton>
                <TaskButton label="文件资源管理器">
                    <svg viewBox="0 0 22 18" className="h-[18px] w-[22px]"><path d="M0 0h9l1 2h12v16H0z" fill="#fde293" /><path d="M0 0h9l1 2v1H0z" fill="#eab630" /><path d="M4 10h14v8h-4v-4H8v4H4z" fill="#3aa7dd" /></svg>
                </TaskButton>
                <TaskButton label="广联达G+" running>
                    <svg viewBox="0 0 24 24" className="size-6"><path d="M24 2c-3 .5-5-1.500-9-2C7-1 1 4 .5 11 0 19 6 24 12.500 24 20 23.500 24 18 21 11h-9v3l4 .5c0 3-2.500 4.500-5 4C7.500 18 6 15 6.500 12 7 8 11 5.500 15 7c4 1 8-1 9-5z" fill="#1b8cf0" /><path d="M22 3.500c-4 1.500-7-1-11 0C6 5 3.500 8 3.500 12" fill="none" stroke="#55c6fb" strokeWidth="1.500" /></svg>
                </TaskButton>
                <TaskButton label="360浏览器" running>
                    <svg viewBox="0 0 22 22" className="size-[22px]"><circle cx="11" cy="11" r="10.500" fill="#5cb531" /><circle cx="11" cy="11" r="9" fill="none" stroke="#d9f2c4" /><circle cx="11.500" cy="11.500" r="5.200" fill="none" stroke="#fff" strokeWidth="2.800" /><path d="M7 11.500h10" stroke="#fff" strokeWidth="2" /><path d="M13 13.600h5" stroke="#5cb531" strokeWidth="1.500" /></svg>
                </TaskButton>
                <TaskButton label="GGJ2013" active>
                    <Icon name="app" className="size-6" />
                </TaskButton>
            </div>
            <div className="ml-auto flex h-10 items-center">
                <span>链接</span>
                <div className="ml-[18px] w-[52px] text-center leading-[17px]">30%<br />CPU使用</div>
                <svg viewBox="0 0 12 7" className="ml-[17px] h-[7px] w-3"><path d="M.5 6.500l5.500-5.500 5.500 5.500" fill="none" stroke="#fff" strokeWidth="1.300" /></svg>
                <svg viewBox="0 0 15 9" className="ml-[11px] h-[9px] w-[15px]"><path d="M.5.5h12v8H.5zM14 3v3" fill="none" stroke="#fff" /><path d="M2 2h4v5H2z" fill="#fff" /></svg>
                <svg viewBox="0 0 13 13" className="ml-[11px] size-[13px]"><path d="M1 11.500C1.500 6 6 1.500 12 1.500M4 12c.5-4 3.500-7 8-7M7 12.500c.5-2.500 2-4 5-4" fill="none" stroke="#ddd" strokeWidth="1.200" /><circle cx="11" cy="11.500" r="1.300" fill="#fff" /></svg>
                <svg viewBox="0 0 16 12" className="ml-2 h-3 w-4"><path d="M.5 4h2.500l3-3v10L3 8H.5zM8 4c1 1.500 1 2.500 0 4M10 2.500c2 2.500 2 4.500 0 7M12.500 1c2.500 3 2.500 7 0 10" fill="none" stroke="#fff" /></svg>
                <svg viewBox="0 0 23 13" className="ml-2 h-[13px] w-[23px]"><rect x=".5" y=".5" width="22" height="12" fill="none" stroke="#fff" /><path d="M3 3.500h17M3 6.500h17" stroke="#fff" strokeDasharray="1.500 1" /><path d="M6 9.500h11" stroke="#fff" /></svg>
                <span className="ml-2.5 text-[13px]">中</span>
                <Sogou className="ml-3.5 size-4" />
                <div className="ml-4 w-[60px] text-center leading-[18px]">10:33<br />2018/2/20</div>
                <div className="relative ml-[19px] h-6 w-[41px]">
                    <svg viewBox="0 0 16 16" className="size-4"><path d="M0 0h16v12H6l-3 3v-3H0z" fill="#fff" /><path d="M3 3.500h10M3 6h10M3 8.500h7" stroke="#01090b" /></svg>
                    <span className="absolute top-2 left-1 flex h-4 w-[21px] items-center justify-center rounded-full border border-[#999] bg-[#2b2b2b] text-[11px] leading-none font-bold">21</span>
                </div>
            </div>
        </footer>
    )
}

function App() {
    return (
        <div className={clsx('relative flex h-screen w-full flex-col overflow-hidden bg-[#f0f0f0] text-black', UI)}>
            <TitleBar />
            <MenuBar />
            <MainToolbar />
            <main className="mt-0.5 flex min-h-0 flex-1 gap-1.5">
                <NavPanel />
                <div className="flex min-w-0 flex-1 flex-col">
                    <ItemToolbar />
                    <div className="flex min-h-0 flex-1">
                        <ComponentList />
                        <PropertyEditor />
                    </div>
                </div>
            </main>
            <StatusBar />
            <TaskBar />

            {/* Floating windows */}
            <SectionWindow />
            <GridDialog />
            <ImeBar />
            <div className="absolute -top-7 left-[885px] flex size-12 items-end justify-center rounded-full border-2 border-[#c5c9c5] bg-[#3fbf5b] pb-1 text-[12px] font-bold text-white shadow-md">70</div>

            {/* Pen marks */}
            <svg viewBox="0 0 1366 768" className="pointer-events-none absolute top-0 left-0 h-[768px] w-[1366px]" aria-hidden="true">
                <g fill="none" stroke="#0000ff" strokeWidth="3">
                    <ellipse cx="372.500" cy="307" rx="95.500" ry="34.500" />
                    <ellipse cx="801" cy="169.500" rx="114" ry="47.500" />
                </g>
            </svg>
        </div>
    )
}

export default App
